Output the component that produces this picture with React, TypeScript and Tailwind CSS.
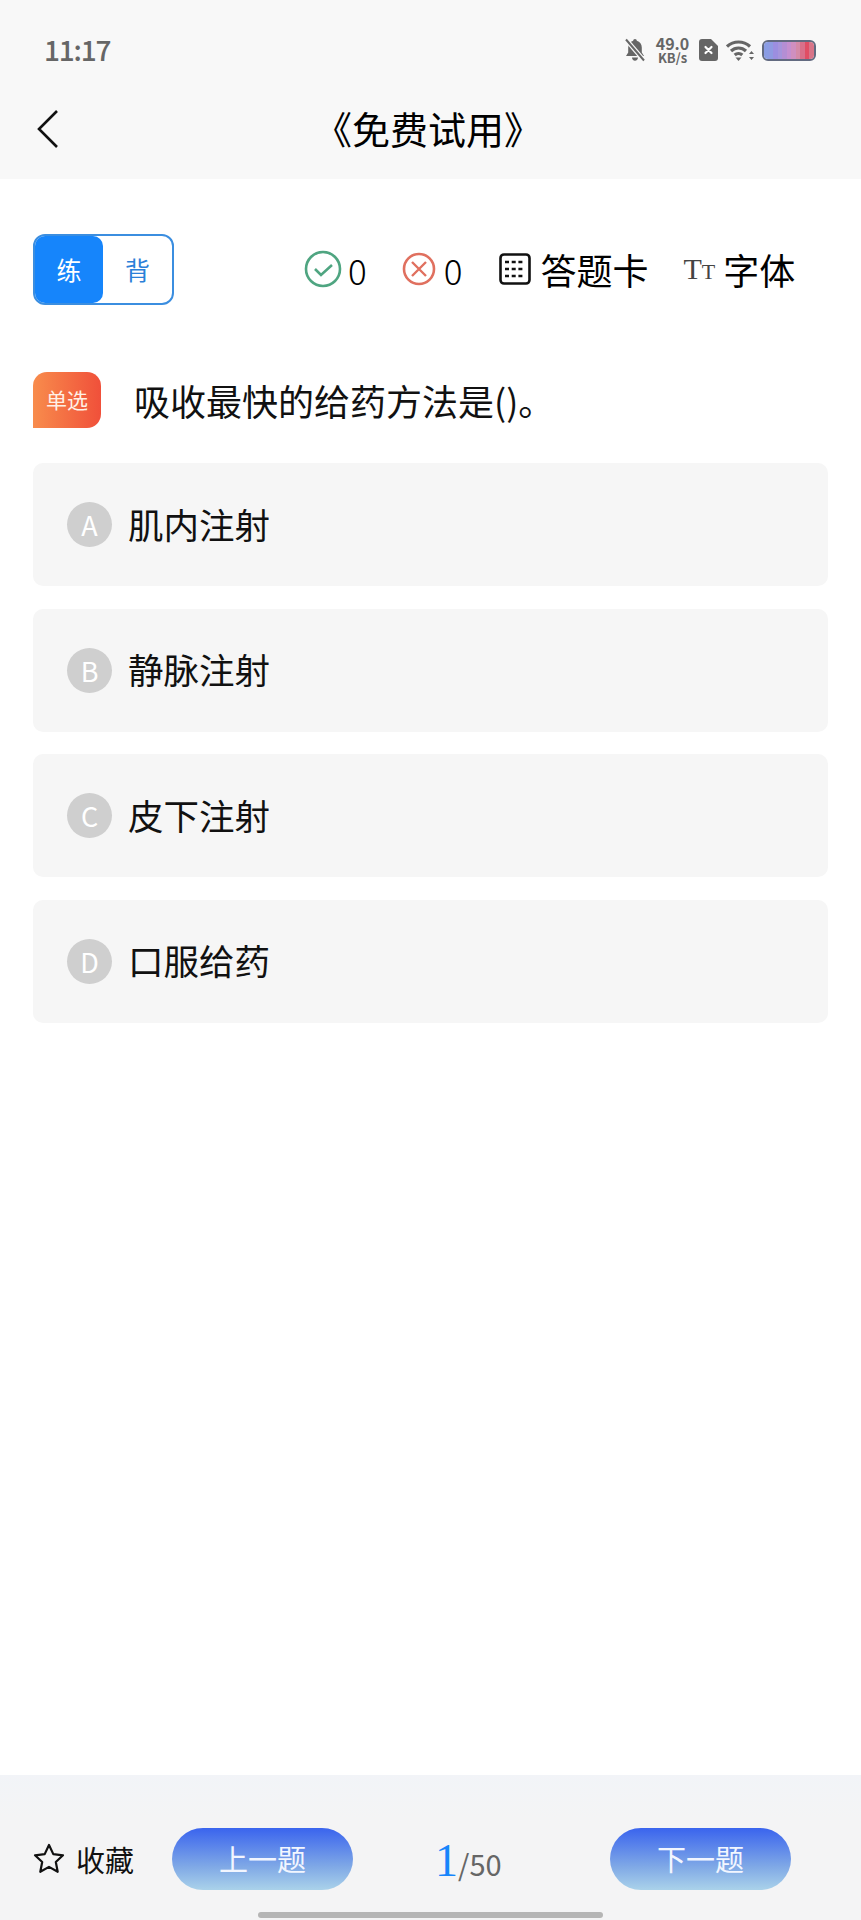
import React from 'react';

const OPTIONS = [
  { key: 'A', text: '肌内注射' },
  { key: 'B', text: '静脉注射' },
  { key: 'C', text: '皮下注射' },
  { key: 'D', text: '口服给药' },
];

const BATTERY = ['#8a9ce4', '#8f9ae2', '#9c8ee0', '#a594dc', '#b48ed4', '#c48fd0', '#cf8fc0', '#d48aa8', '#d9708a', '#e04e64', '#d87488'];

function StatusBar() {
  return (
    <div className="flex h-[100px] items-center pl-[44px] pr-[45px]">
      <span className="mt-[-3px] text-[28px] font-medium leading-none tracking-[-1.2px] text-[#666666]">11:17</span>
      <div className="ml-auto flex items-center">
        {/* muted bell */}
        <svg width="22" height="24" viewBox="0 0 22 24" className="mr-[8px]">
          <path d="M11 1c1 0 1.800.8 1.800 1.800 3.200.8 5 3.500 5 6.700v5l2.200 3.500H2l2.200-3.500v-5c0-3.200 1.800-5.900 5-6.700C9.200 1.800 10 1 11 1zM8 19.500h6c0 1.800-1.300 3.300-3 3.300s-3-1.500-3-3.300z" fill="#666666" />
          <path d="M2 1.500l18 21" stroke="#f8f8f8" strokeWidth="4.500" />
          <path d="M2 1.500l18 21" stroke="#666666" strokeWidth="2" />
        </svg>
        <div className="flex w-[37px] flex-col items-center font-semibold text-[#666666]">
          <span className="text-[16px] leading-[16px]">49.0</span>
          <span className="text-[13px] leading-[14px]">KB/s</span>
        </div>
        {/* sim with cross */}
        <svg width="19" height="22" viewBox="0 0 19 22" className="ml-[8px]">
          <path d="M3 0h9l7 7v12a3 3 0 0 1-3 3H3a3 3 0 0 1-3-3V3a3 3 0 0 1 3-3z" fill="#666666" />
          <path d="M6.500 8l6 6M12.500 8l-6 6" stroke="#ffffff" strokeWidth="2.200" strokeLinecap="round" />
        </svg>
        {/* wifi */}
        <svg width="28" height="22" viewBox="0 0 28 22" className="ml-[8px]" fill="none" stroke="#666666" strokeWidth="3.200">
          <path d="M1 7.500c6.500-6 16.500-6 23 0" />
          <path d="M5 12c4.300-4 10.700-4 15 0" />
          <path d="M8.700 16c2.200-2 5.400-2 7.600 0" />
          <path d="M12.500 22l-3-3.500h6z" fill="#666666" stroke="none" />
          <path d="M25.500 12l2.500 3h-5zM25.500 21l2.500-3h-5z" fill="#666666" stroke="none" />
        </svg>
        {/* battery */}
        <div className="ml-[8px] flex h-[21px] w-[54px] overflow-hidden rounded-[6px] border-[2.500px] border-[#626a80]">
          {BATTERY.map((c) => (
            <div key={c} className="flex-1" style={{ background: c }} />
          ))}
        </div>
      </div>
    </div>
  );
}

function NavBar() {
  return (
    <div className="relative flex h-[79px] items-center justify-center">
      <svg width="24" height="40" viewBox="0 0 24 40" fill="none" stroke="#111111" strokeWidth="2.600" className="absolute left-[36px] top-[9px]">
        <path d="M21 2L3 20l18 18" />
      </svg>
      <span className="ml-[-5px] mt-[-23px] text-[38px] leading-none text-black">《免费试用》</span>
    </div>
  );
}

function Toolbar() {
  return (
    <div className="mx-[33px] mt-[55px] flex h-[71px] items-start">
      <div className="flex h-[71px] w-[141px] rounded-[12px] border-2 border-[#3b8ee0] text-[25px]">
        <div className="flex w-[68px] items-center justify-center rounded-[10px] bg-[#1685fb] text-white">练</div>
        <div className="flex flex-1 items-center justify-center text-[#2a80d8]">背</div>
      </div>
      <div className="ml-[130px] mt-[15px] flex h-[40px] items-center text-[35px] leading-none text-black">
        <svg width="38" height="38" viewBox="0 0 38 38" fill="none">
          <circle cx="19" cy="19" r="17" stroke="#4fa581" strokeWidth="2.600" />
          <path d="M11 19l6 6 11-10" stroke="#4fa581" strokeWidth="2.600" />
        </svg>
        <span className="ml-[6px] font-light">0</span>
        <svg width="34" height="34" viewBox="0 0 34 34" fill="none" className="ml-[35px]">
          <circle cx="17" cy="17" r="15" stroke="#e0705f" strokeWidth="2.600" />
          <path d="M10 10l14 14M24 10L10 24" stroke="#e0705f" strokeWidth="2.400" />
        </svg>
        <span className="ml-[8px] font-light">0</span>
        <svg width="32" height="32" viewBox="0 0 32 32" fill="none" className="ml-[37px]">
          <rect x="1.500" y="1.500" width="29" height="29" rx="3.500" stroke="#111111" strokeWidth="2.600" />
          <path d="M6 9h20M6 16h20M6 23h20" stroke="#111111" strokeWidth="2.400" strokeDasharray="4 2.700" />
        </svg>
        <span className="ml-[9px] text-[36px]">答题卡</span>
        <span className="ml-[35px] font-['Liberation_Serif',serif] text-[30px] leading-none text-[#444444]">
          T<span className="text-[22px]">T</span>
        </span>
        <span className="ml-[8px] text-[36px]">字体</span>
      </div>
    </div>
  );
}

function Question() {
  return (
    <div className="mx-[33px] mt-[67px] flex items-start">
      <div className="flex h-[56px] w-[68px] items-center justify-center rounded-[14px] rounded-bl-none bg-[linear-gradient(90deg,#f88c4c,#f0503a)] text-[21px] text-[#fff0e6]">
        单选
      </div>
      <div className="ml-[33px] mt-[3px] text-[36px] leading-[50px] text-[#111111]">吸收最快的给药方法是()。</div>
    </div>
  );
}

function Option({ letter, text }: { letter: string; text: string }) {
  return (
    <div className="flex h-[123px] items-center rounded-[10px] bg-[#f6f6f6] pl-[34px]">
      <div className="flex h-[45px] w-[45px] items-center justify-center rounded-full bg-[#cfcfcf] text-[27px] leading-none text-white">
        {letter}
      </div>
      <span className="ml-[16px] mt-[-2px] text-[35.500px] leading-none text-[#111111]">{text}</span>
    </div>
  );
}

function Footer() {
  return (
    <div className="relative mt-auto flex h-[145px] items-start bg-[linear-gradient(180deg,#f2f4f8_0%,#f4f4f5_30%)] pl-[33px] pt-[53px]">
      <div className="flex h-[62px] items-center">
        <svg width="32" height="32" viewBox="0 0 32 32" fill="none" stroke="#111111" strokeWidth="2.200" strokeLinejoin="round">
          <path d="M16 2l4.300 9.100 9.700 1.200-7.200 6.700 1.900 9.800-8.700-4.900-8.700 4.900 1.900-9.800L2 12.300l9.700-1.200z" />
        </svg>
        <span className="ml-[11px] text-[29px] leading-none text-[#111111]">收藏</span>
      </div>
      <button className="ml-[38px] flex h-[62px] w-[181px] items-center justify-center rounded-full bg-[linear-gradient(180deg,#3a64ee_0%,#7fa8e6_62%,#aad2ea_100%)] text-[29px] text-[#f2f6ff]">
        上一题
      </button>
      <div className="ml-[82px] mt-[2px] flex h-[62px] w-[68px] items-baseline whitespace-nowrap">
        <span className="font-['Liberation_Serif',serif] text-[46px] leading-[62px] text-[#1685fb]">1</span>
        <span className="text-[29px] text-[#666666]">/50</span>
      </div>
      <button className="ml-[107px] flex h-[62px] w-[181px] items-center justify-center rounded-full bg-[linear-gradient(180deg,#3a64ee_0%,#7fa8e6_62%,#aad2ea_100%)] text-[29px] text-[#f2f6ff]">
        下一题
      </button>
      <div className="absolute bottom-[2px] left-[258px] h-[6px] w-[345px] rounded-full bg-[#b5b5b5]" />
    </div>
  );
}

export default function App() {
  return (
    <div className="flex h-[1920px] w-[861px] flex-col overflow-hidden bg-white font-['Noto_Sans_CJK_SC','Noto_Sans',sans-serif]">
      <div className="h-[179px] bg-[#f8f8f8]">
        <StatusBar />
        <NavBar />
      </div>
      <Toolbar />
      <Question />
      <div className="mx-[33px] mt-[35px] flex flex-col gap-[22.500px]">
        {OPTIONS.map((o) => (
          <Option key={o.key} letter={o.key} text={o.text} />
        ))}
      </div>
      <Footer />
    </div>
  );
}
